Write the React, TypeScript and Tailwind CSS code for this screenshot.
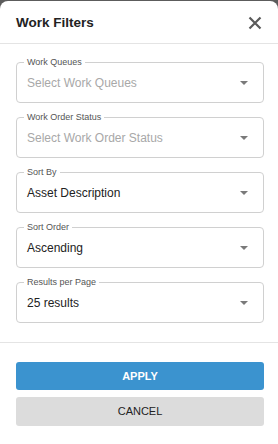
const fields = [
  { label: "Work Queues", value: "Select Work Queues", placeholder: true },
  { label: "Work Order Status", value: "Select Work Order Status", placeholder: true },
  { label: "Sort By", value: "Asset Description", placeholder: false },
  { label: "Sort Order", value: "Ascending", placeholder: false },
  { label: "Results per Page", value: "25 results", placeholder: false },
];

function SelectField({ label, value, placeholder }: { label: string; value: string; placeholder: boolean }) {
  return (
    <div className="relative h-[41px] border border-[#d0d0d0] rounded-[4px] flex items-center pl-[10px] pr-[15px]">
      <span className="absolute -top-[6px] left-[7px] bg-white px-[3px] text-[9px] leading-[11px] text-[#555]">
        {label}
      </span>
      <span className={`flex-1 text-[12px] ${placeholder ? "text-[#a8a8a8]" : "text-[#222]"}`}>{value}</span>
      <svg width="8" height="4" viewBox="0 0 8 4">
        <path d="M0 0h8L4 4z" fill="#7a7a7a" />
      </svg>
    </div>
  );
}

export default function App() {
  return (
    <div className="w-[278px] h-[444px] bg-[#5c5c5c] pt-[1px] overflow-hidden" style={{ fontFamily: '"Liberation Sans", Arial, sans-serif' }}>
      <div className="bg-white rounded-t-[8px] h-full">
        {/* Header */}
        <div className="h-[43px] flex items-center justify-between pl-4 pr-[16px] border-b border-[#e4e4e4]">
          <h1 className="text-[13.5px] font-bold text-[#222] pt-[2px]">Work Filters</h1>
          <svg width="14" height="14" viewBox="0 0 14 14" className="mt-[2px]">
            <path d="M1.5 1.5l11 11M12.5 1.5l-11 11" stroke="#5a5a5a" strokeWidth="2.2" strokeLinecap="butt" />
          </svg>
        </div>

        {/* Fields */}
        <div className="flex flex-col gap-[14px] pl-4 pr-[14px] pt-[18px] pb-[19px] border-b border-[#e4e4e4]">
          {fields.map((f) => (
            <SelectField key={f.label} {...f} />
          ))}
        </div>

        {/* Actions */}
        <div className="flex flex-col gap-[7px] pl-4 pr-[14px] pt-[19px]">
          <button className="h-[28px] rounded-[3px] bg-[#3b93cf] text-white text-[11px] font-bold">APPLY</button>
          <button className="h-[29px] rounded-[3px] bg-[#dcdcdc] text-[#222] text-[11px]">CANCEL</button>
        </div>
      </div>
    </div>
  );
}
